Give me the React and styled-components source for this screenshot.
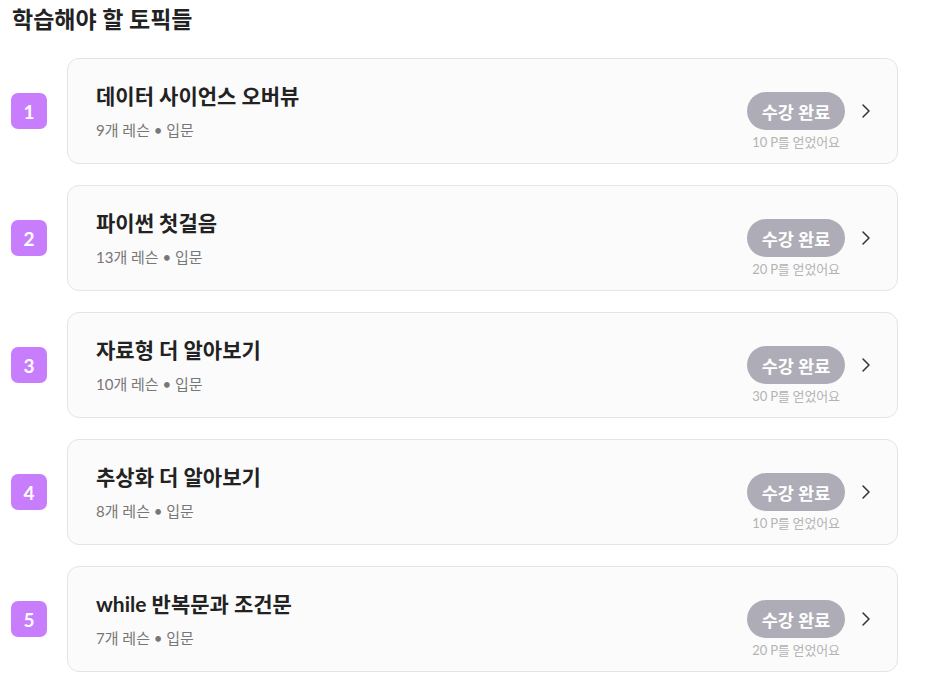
import React from "react";
import styled, { createGlobalStyle } from "styled-components";

const Global = createGlobalStyle`
  html, body { margin: 0; padding: 0; background: #fff; }
  body { font-family: "Lato", "Noto Sans CJK KR", "Noto Sans", sans-serif; color: #222; }
`;

const Page = styled.div`
  padding: 3px 37px 0 11px;
`;

const Heading = styled.h2`
  margin: 0 0 23px 1px;
  font-size: 23px;
  line-height: 32px;
  font-weight: 700;
  color: #222;
`;

const List = styled.div`
  display: flex;
  flex-direction: column;
  gap: 21px;
`;

const Row = styled.div`
  display: flex;
  align-items: center;
  gap: 20px;
`;

const Badge = styled.div`
  width: 36px;
  height: 36px;
  flex: none;
  border-radius: 7px;
  background: #c77dfc;
  color: #fff;
  font-weight: 700;
  font-size: 19px;
  display: flex;
  align-items: center;
  justify-content: center;
`;

const Card = styled.div`
  flex: 1;
  height: 106px;
  box-sizing: border-box;
  border: 1px solid #e4e4e6;
  border-radius: 12px;
  background: #fbfbfb;
  display: flex;
  align-items: center;
  padding: 0 22px 0 28px;
`;

const Info = styled.div`
  flex: 1;
  display: flex;
  flex-direction: column;
  gap: 10px;
`;

const Title = styled.div`
  font-size: 21px;
  line-height: 28px;
  font-weight: 700;
  color: #222;
`;

const Meta = styled.div`
  font-size: 15px;
  line-height: 20px;
  color: #777;
`;

const Status = styled.div`
  display: flex;
  flex-direction: column;
  align-items: center;
  gap: 4px;
  margin-top: 20px;
`;

const Done = styled.div`
  width: 98px;
  height: 38px;
  border-radius: 19px;
  background: #aeadb7;
  color: #fff;
  font-size: 17.5px;
  font-weight: 700;
  display: flex;
  align-items: center;
  justify-content: center;
`;

const Points = styled.div`
  font-size: 13px;
  line-height: 16px;
  color: #b3b3b3;
  letter-spacing: -0.2px;
`;

const Chevron = styled.svg`
  width: 18px;
  height: 18px;
  margin-left: 12px;
  flex: none;
`;

const topics = [
  { title: "데이터 사이언스 오버뷰", lessons: 9, points: 10 },
  { title: "파이썬 첫걸음", lessons: 13, points: 20 },
  { title: "자료형 더 알아보기", lessons: 10, points: 30 },
  { title: "추상화 더 알아보기", lessons: 8, points: 10 },
  { title: "while 반복문과 조건문", lessons: 7, points: 20 },
];

export default function App() {
  return (
    <Page>
      <Global />
      <Heading>학습해야 할 토픽들</Heading>
      <List>
        {topics.map((t, i) => (
          <Row key={i}>
            <Badge>{i + 1}</Badge>
            <Card>
              <Info>
                <Title>{t.title}</Title>
                <Meta>{t.lessons}개 레슨 • 입문</Meta>
              </Info>
              <Status>
                <Done>수강 완료</Done>
                <Points>{t.points} P를 얻었어요</Points>
              </Status>
              <Chevron viewBox="0 0 18 18" fill="none" stroke="#333" strokeWidth="1.5" strokeLinecap="round" strokeLinejoin="round">
                <path d="M6 3 L12 9 L6 15" />
              </Chevron>
            </Card>
          </Row>
        ))}
      </List>
    </Page>
  );
}
